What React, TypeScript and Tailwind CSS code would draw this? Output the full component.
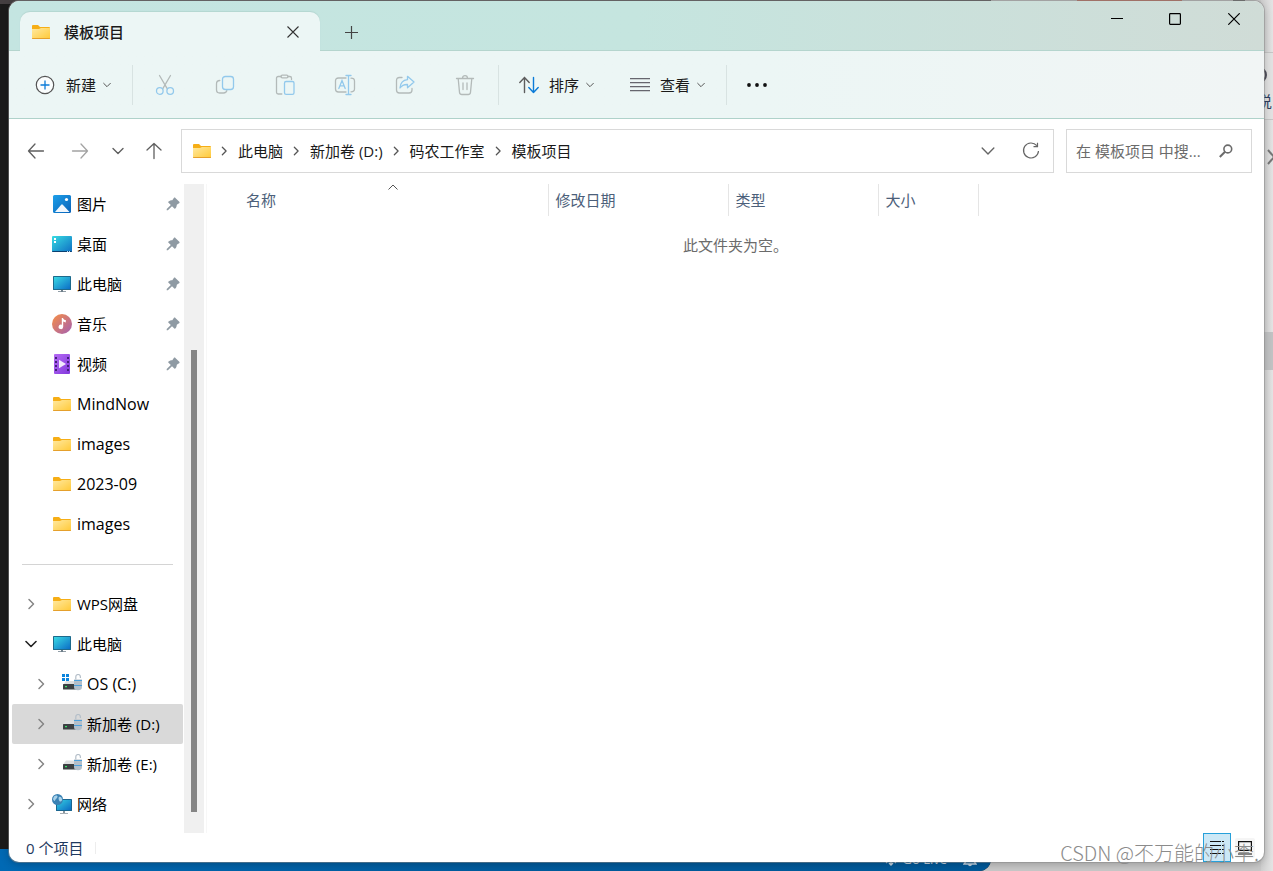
import React, { useState } from 'react';

type IconProps = { className?: string };

type NavItem = {
  label: string;
  icon: React.FC<IconProps>;
  pinned?: boolean;
  latin?: boolean;
};

type TreeItem = {
  id: string;
  label: string;
  icon: React.FC<IconProps>;
  child?: boolean;
  open?: boolean;
  latin?: boolean;
};

/* ---------- colour icons ---------- */

const FolderIcon: React.FC<IconProps> = ({ className }) => (
  <svg viewBox="0 0 20 20" className={className} aria-hidden="true">
    <defs>
      <linearGradient id="folderFront" x1="0" y1="0" x2="1" y2="1">
        <stop offset="0" stopColor="#ffe9a0" />
        <stop offset="1" stopColor="#ffc937" />
      </linearGradient>
    </defs>
    <path d="M1 4a1 1 0 0 1 1-1h5l2 2h9a1 1 0 0 1 1 1v3H1z" fill="#f6ae16" />
    <path d="M1 7h7l2-1h9v10.200a.8.8 0 0 1-.8.8H1.800a.8.800 0 0 1-.8-.8z" fill="url(#folderFront)" />
    <path d="M1 16h18v.3a.7.7 0 0 1-.7.700H1.700a.7.7 0 0 1-.7-.7z" fill="#e5a02c" />
  </svg>
);

const PicturesIcon: React.FC<IconProps> = ({ className }) => (
  <svg viewBox="0 0 20 20" className={className} aria-hidden="true">
    <defs>
      <linearGradient id="picBg" x1="0" y1="0" x2="1" y2="1">
        <stop offset="0" stopColor="#1da0ea" />
        <stop offset="1" stopColor="#0a62b8" />
      </linearGradient>
    </defs>
    <rect x="1" y="1" width="18" height="18" rx="1.500" fill="url(#picBg)" />
    <path d="M3 18l6.200-7.200a1 1 0 0 1 1.600 0L17.500 18z" fill="#f1f7fd" />
    <circle cx="14.500" cy="5.500" r="1.600" fill="#fff" />
  </svg>
);

const DesktopIcon: React.FC<IconProps> = ({ className }) => (
  <svg viewBox="0 0 20 20" className={className} aria-hidden="true">
    <defs>
      <linearGradient id="deskBg" x1="0" y1="0" x2="1" y2="1">
        <stop offset="0" stopColor="#38dce2" />
        <stop offset="1" stopColor="#0f6fc4" />
      </linearGradient>
    </defs>
    <rect x="0" y="2" width="20" height="16" rx="1" fill="url(#deskBg)" />
    <path d="M0 17h20a1 1 0 0 1-1 1H1a1 1 0 0 1-1-1z" fill="#0b3f70" />
    <path d="M2 4h2v2H2zM2 7h2v2H2z" fill="#fff" />
    <path d="M15 17h1v1h-1zM17 17h1v1h-1z" fill="#b9dcf5" />
  </svg>
);

const MonitorIcon: React.FC<IconProps> = ({ className }) => (
  <svg viewBox="0 0 20 20" className={className} aria-hidden="true">
    <defs>
      <linearGradient id="monBg" x1="0" y1="0" x2="1" y2="1">
        <stop offset="0" stopColor="#39d9e4" />
        <stop offset="1" stopColor="#0c6ec6" />
      </linearGradient>
    </defs>
    <rect x="1" y="2" width="18" height="14" rx=".6" fill="#1d6a8c" />
    <rect x="2" y="3" width="16" height="12" fill="url(#monBg)" />
    <path d="M9 16h2v1.200h3V18H6v-.8h3z" fill="#6f7f8a" />
  </svg>
);

const MusicIcon: React.FC<IconProps> = ({ className }) => (
  <svg viewBox="0 0 20 20" className={className} aria-hidden="true">
    <defs>
      <linearGradient id="musicBg" x1="0" y1="0" x2="1" y2="1">
        <stop offset=".1" stopColor="#f08a4e" />
        <stop offset="1" stopColor="#a35fb4" />
      </linearGradient>
    </defs>
    <circle cx="10" cy="10" r="10" fill="url(#musicBg)" />
    <path d="M9.800 4h1.200c.4 1.500 1.500 2 2.800 2.100v2.300c-1 0-2-.3-2.600-.8v5.200a2.300 2.300 0 1 1-1.400-2.100z" fill="#fff" />
  </svg>
);

const VideoIcon: React.FC<IconProps> = ({ className }) => (
  <svg viewBox="0 0 20 20" className={className} aria-hidden="true">
    <defs>
      <linearGradient id="videoBg" x1="0" y1="0" x2="1" y2="1">
        <stop offset="0" stopColor="#b56bf4" />
        <stop offset="1" stopColor="#8238dc" />
      </linearGradient>
    </defs>
    <rect x="2" y="0" width="16" height="20" rx="1" fill="url(#videoBg)" />
    <path
      d="M3 3h2v2H3zM3 7h2v2H3zM3 11h2v2H3zM3 15h2v2H3zM15 3h2v2h-2zM15 7h2v2h-2zM15 11h2v2h-2zM15 15h2v2h-2z"
      fill="#43207a"
    />
    <path d="M7 5.800v8.400l7-4.200z" fill="#f2eafc" />
  </svg>
);

const DriveIcon: React.FC<IconProps> = ({ className }) => (
  <svg viewBox="0 0 20 20" className={className} aria-hidden="true">
    <path d="M1 10.500l3-4h13v4z" fill="#dedfe0" />
    <rect x="1" y="10" width="14" height="5.500" rx=".6" fill="#3c4043" />
    <rect x="3" y="12" width="2" height="1.200" fill="#3be36b" />
    <path d="M13.800 5.500V2.800a2.300 2.300 0 0 1 4.600 0V4" fill="none" stroke="#b4bfc9" strokeWidth="1.200" />
    <path d="M12 5.500h8v7.500a4 3.200 0 0 1-8 0z" fill="#b3bfca" />
    <path d="M12 6h8v1h-8zM12 11h8v1h-8z" fill="#4aa0dc" />
  </svg>
);

const SystemDriveIcon: React.FC<IconProps> = ({ className }) => (
  <svg viewBox="0 0 20 20" className={className} aria-hidden="true">
    <path d="M1 11l3-4h13v4z" fill="#dedfe0" />
    <path d="M0 0h3v3H0zM4 0h3v3H4zM0 4h3v3H0zM4 4h3v3H4z" fill="#0a84dd" />
    <rect x="1" y="10" width="14" height="5.500" rx=".6" fill="#3c4043" />
    <rect x="3" y="12" width="2" height="1.200" fill="#3be36b" />
    <path d="M13.800 5.500V2.800a2.300 2.300 0 0 1 4.600 0V4" fill="none" stroke="#b4bfc9" strokeWidth="1.200" />
    <path d="M12 5.500h8v7.500a4 3.200 0 0 1-8 0z" fill="#b3bfca" />
    <path d="M12 6h8v1h-8zM12 11h8v1h-8z" fill="#4aa0dc" />
  </svg>
);

const NetworkIcon: React.FC<IconProps> = ({ className }) => (
  <svg viewBox="0 0 20 20" className={className} aria-hidden="true">
    <defs>
      <linearGradient id="netBg" x1="0" y1="0" x2="1" y2="1">
        <stop offset="0" stopColor="#35cfe0" />
        <stop offset="1" stopColor="#0b6cc4" />
      </linearGradient>
    </defs>
    <rect x="4" y="5" width="16" height="12" rx=".6" fill="#1a6690" />
    <rect x="5" y="6" width="14" height="10" fill="url(#netBg)" />
    <path d="M11 17h2v2h3v.8H8V19h3z" fill="#8c979f" />
    <circle cx="5.500" cy="5.500" r="5.500" fill="#3b82b4" />
    <path d="M2 2.500C4 .8 6 1.500 5.500 3S3.500 5 3 6.500 1.500 6 1 5zM7 3c1.500-.5 2.500.5 3 2S9 8 8 7.500 6 4 7 3z" fill="#a9d2ea" />
  </svg>
);

const PinIcon: React.FC<IconProps> = ({ className }) => (
  <svg viewBox="0 0 14 14" className={className} aria-hidden="true">
    <path
      d="M7.800 1c.4-.6 1.100-.6 1.600-.1l3.900 3.900c.5.500.4 1.200-.2 1.500L10.800 7.700c-.1 1.600-.4 2.600-1.200 3.600-.4.500-.9.500-1.300.1L6 9.200 1.900 13.200H.7V12L4.800 8 2.500 5.800c-.4-.4-.4-1 .1-1.300 1.100-.8 2.200-1.100 3.700-1.200z"
      fill="#8f9aa3"
    />
  </svg>
);

/* ---------- line icons ---------- */

const ChevronDown: React.FC<IconProps> = ({ className }) => (
  <svg viewBox="0 0 12 12" className={className} fill="none" stroke="currentColor" strokeLinecap="round" strokeLinejoin="round" aria-hidden="true">
    <path d="M1 3.500l5 5 5-5" />
  </svg>
);

const ChevronRight: React.FC<IconProps> = ({ className }) => (
  <svg viewBox="0 0 12 12" className={className} fill="none" stroke="currentColor" strokeLinecap="round" strokeLinejoin="round" aria-hidden="true">
    <path d="M4 1.500L8.500 6 4 10.500" />
  </svg>
);

const ArrowIcon: React.FC<IconProps> = ({ className }) => (
  <svg viewBox="0 0 18 18" className={className} fill="none" stroke="currentColor" strokeWidth="1.300" strokeLinecap="round" strokeLinejoin="round" aria-hidden="true">
    <path d="M16.500 9H1.500M8 2L1.500 9 8 16" />
  </svg>
);

const CutIcon = () => (
  <svg viewBox="0 0 20 22" className="h-[22px] w-5" fill="none" strokeWidth="1.300" strokeLinecap="round" aria-hidden="true">
    <path d="M4.500 1.500l7.700 13.200M15.500 1.500L7.800 14.700" stroke="#b3bab9" />
    <circle cx="4.800" cy="17" r="3.300" stroke="#93c9ec" />
    <circle cx="15.200" cy="17" r="3.300" stroke="#93c9ec" />
  </svg>
);

const CopyIcon = () => (
  <svg viewBox="0 0 20 20" className="h-5 w-5" fill="none" strokeWidth="1.300" strokeLinecap="round" aria-hidden="true">
    <path d="M4.800 5.500c-2 0-3.300 1.200-3.300 3.200v6.100c0 2 1.200 3.200 3.200 3.200h3.800c1.900 0 3-.7 3.300-2.300" stroke="#b3bab9" />
    <rect x="7.500" y="1.500" width="11" height="13" rx="2.800" stroke="#93c9ec" />
  </svg>
);

const PasteIcon = () => (
  <svg viewBox="0 0 20 22" className="h-[22px] w-5" fill="none" strokeWidth="1.300" strokeLinecap="round" aria-hidden="true">
    <path d="M6 2.500H3.200c-1 0-1.700.7-1.700 1.700v14.100c0 1 .7 1.700 1.700 1.700h3.600M13 2.500h1.800c1 0 1.700.7 1.700 1.700v1.300" stroke="#b3bab9" />
    <rect x="6" y="1.200" width="7" height="2.600" rx="1.300" stroke="#b3bab9" />
    <rect x="9.500" y="7.500" width="9.500" height="12.800" rx="1.600" stroke="#93c9ec" />
  </svg>
);

const RenameIcon = () => (
  <svg viewBox="0 0 22 22" className="h-[22px] w-[22px]" fill="none" strokeWidth="1.300" strokeLinecap="round" aria-hidden="true">
    <path d="M12 4H4.500C2.500 4 1.500 5 1.500 7v8c0 2 1 3 3 3H12M17 4.200c2.200 0 3.500.9 3.500 2.800v8c0 1.900-1.300 2.800-3.500 2.800" stroke="#b3bab9" />
    <path d="M4.800 14.500L8 6.500l3.200 8M5.900 11.800h4.200M14.500 1.500v19M12 1.500h5M12 20.500h5" stroke="#93c9ec" />
  </svg>
);

const ShareIcon = () => (
  <svg viewBox="0 0 20 20" className="h-5 w-5" fill="none" strokeWidth="1.300" strokeLinecap="round" strokeLinejoin="round" aria-hidden="true">
    <path d="M7 2.500H4.500c-2 0-3 1-3 3V15c0 2 1 3 3 3H14c2 0 3-1 3-3v-1.500" stroke="#b3bab9" />
    <path d="M12.500 1.300L19 7l-6.500 5.700V9.500c-3.500-.2-5.600.8-7.500 3.500.3-4.700 2.800-7.800 7.500-8.300z" stroke="#93c9ec" />
  </svg>
);

const TrashIcon = () => (
  <svg viewBox="0 0 20 22" className="h-[22px] w-5" fill="none" stroke="#b3bab9" strokeWidth="1.300" strokeLinecap="round" aria-hidden="true">
    <path d="M1.500 4.500h17M3.200 4.500l1.300 13.800c.2 1.300 1 2.200 2.300 2.200h6.400c1.300 0 2.100-.9 2.300-2.200l1.300-13.800M7.500 4.300c0-3.700 5-3.700 5 0M8 9v6.500M12 9v6.500" />
  </svg>
);

const SortIcon = () => (
  <svg viewBox="0 0 20 18" className="h-[18px] w-5" fill="none" strokeWidth="1.400" strokeLinecap="round" strokeLinejoin="round" aria-hidden="true">
    <path d="M5.500 16.500v-15M.8 6.500l4.700-5 4.700 5" stroke="#5d5d5d" />
    <path d="M14.500 1.500v15M9.800 11.500l4.700 5 4.700-5" stroke="#0a7bd8" />
  </svg>
);

const quickItems: NavItem[] = [
  { label: '图片', icon: PicturesIcon, pinned: true },
  { label: '桌面', icon: DesktopIcon, pinned: true },
  { label: '此电脑', icon: MonitorIcon, pinned: true },
  { label: '音乐', icon: MusicIcon, pinned: true },
  { label: '视频', icon: VideoIcon, pinned: true },
  { label: 'MindNow', icon: FolderIcon, latin: true },
  { label: 'images', icon: FolderIcon, latin: true },
  { label: '2023-09', icon: FolderIcon, latin: true },
  { label: 'images', icon: FolderIcon, latin: true },
];

const treeItems: TreeItem[] = [
  { id: 'wps', label: 'WPS网盘', icon: FolderIcon },
  { id: 'pc', label: '此电脑', icon: MonitorIcon, open: true },
  { id: 'c', label: 'OS (C:)', icon: SystemDriveIcon, child: true, latin: true },
  { id: 'd', label: '新加卷 (D:)', icon: DriveIcon, child: true },
  { id: 'e', label: '新加卷 (E:)', icon: DriveIcon, child: true },
  { id: 'net', label: '网络', icon: NetworkIcon },
];

const crumbs = ['此电脑', '新加卷 (D:)', '码农工作室', '模板项目'];

const editActions = [
  { label: '剪切', icon: CutIcon },
  { label: '复制', icon: CopyIcon },
  { label: '粘贴', icon: PasteIcon },
  { label: '重命名', icon: RenameIcon },
  { label: '共享', icon: ShareIcon },
  { label: '删除', icon: TrashIcon },
];

// Whatever peeks out from behind the explorer window
const Backdrop = () => (
  <div className="absolute inset-0 overflow-hidden bg-[#c9c9c9]">
    <div className="absolute inset-y-0 left-0 right-[282px] overflow-hidden rounded-br-xl bg-[#1b1b1b]">
      <div className="absolute inset-x-0 top-0 h-1 bg-[#443f41]" />
      <div className="absolute inset-x-0 bottom-0 flex h-[22px] items-center justify-end gap-4 bg-linear-to-r from-[#0069b4] via-[#005c9e] to-[#005a9a] pr-[14px] text-[13px] text-[#c5d5e2]">
        <span className="flex items-center gap-1">
          <svg viewBox="0 0 14 14" className="h-[14px] w-[14px]" fill="none" stroke="currentColor" strokeWidth="1.300" aria-hidden="true">
            <path d="M3 10a5 5 0 1 1 8 0M7 6v7M5 10l2 2 2-2" />
          </svg>
          Go Live
        </span>
        <svg viewBox="0 0 14 14" className="h-[14px] w-[14px]" fill="none" stroke="currentColor" strokeWidth="1.300" aria-hidden="true">
          <path d="M1 11h12l-1.500-2V5.500a4.500 4.500 0 0 0-9 0V9zM5.500 11a1.500 1.500 0 0 0 3 0" />
        </svg>
      </div>
    </div>
    <div className="absolute right-[91px] top-0 h-1 w-[105px] bg-[#c5604b]" />
    <div className="absolute right-[28px] top-0 h-1 w-3 bg-[#555]" />
    <div className="absolute inset-y-0 right-0 w-3 bg-linear-to-r from-[#cfcfcf] to-[#e4e4e4]">
      <div className="absolute inset-x-0 top-[52px] h-[68px] border-y border-[#c6c6c6] bg-[#e2e2e2]" />
      <div className="absolute right-[6px] top-[67px] h-4 w-4 rounded-full border-2 border-[#50505c]" />
      <span className="absolute right-px top-[91px] text-[15px] leading-5 text-[#2f3f5f]">说</span>
      <svg viewBox="0 0 12 16" className="absolute -right-1 top-[149px] h-4 w-3" fill="none" stroke="#777" strokeWidth="2" aria-hidden="true">
        <path d="M3 1l6 7-6 7" />
      </svg>
      <div className="absolute inset-x-0 top-[332px] h-[38px] bg-[#c2c3c4]" />
    </div>
  </div>
);

const TitleBar = () => (
  <header className="flex h-[50px] shrink-0 border-b border-[#b5d5ce] bg-linear-to-r from-[#c4e5e1] via-[#c5e5df] via-50% to-[#d0dcd7]">
    <div className="relative z-10 ml-[11px] mt-[11px] flex h-[39px] w-[300px] items-center rounded-t-[10px] bg-[#ecf6f5] pl-[11px] pr-[15px] shadow-[0_-1px_1px_#b4d6d1]">
      <FolderIcon className="h-5 w-5 shrink-0" />
      <span className="ml-[13px] flex-1 text-[15px] font-medium leading-5 text-[#1a1a1a]">模板项目</span>
      <button type="button" aria-label="关闭标签页" className="flex h-6 w-6 items-center justify-center text-[#333]">
        <svg viewBox="0 0 12 12" className="h-3 w-3" stroke="currentColor" strokeWidth="1.100" aria-hidden="true">
          <path d="M.5.500l11 11M11.500.500l-11 11" />
        </svg>
      </button>
    </div>
    <button type="button" aria-label="新建标签页" className="ml-4 mt-[19px] flex h-6 w-[30px] items-center justify-center text-[#444]">
      <svg viewBox="0 0 13 13" className="h-[13px] w-[13px]" stroke="currentColor" strokeWidth="1.200" aria-hidden="true">
        <path d="M6.500 0v13M0 6.500h13" />
      </svg>
    </button>
    <div className="ml-auto flex h-9 text-black">
      <button type="button" aria-label="最小化" className="flex w-[58px] items-center justify-center">
        <svg viewBox="0 0 12 12" className="h-3 w-3" stroke="currentColor" aria-hidden="true">
          <path d="M0 5.500h12" />
        </svg>
      </button>
      <button type="button" aria-label="最大化" className="flex w-[58px] items-center justify-center">
        <svg viewBox="0 0 12 12" className="h-3 w-3" fill="none" stroke="currentColor" strokeWidth="1.200" aria-hidden="true">
          <rect x=".6" y=".6" width="10.800" height="10.800" rx=".8" />
        </svg>
      </button>
      <button type="button" aria-label="关闭" className="flex w-[60px] items-center justify-center">
        <svg viewBox="0 0 12 12" className="h-3 w-3" stroke="currentColor" strokeWidth="1.200" aria-hidden="true">
          <path d="M.3.300l11.400 11.400M11.700.300L.3 11.700" />
        </svg>
      </button>
    </div>
  </header>
);

const Divider = () => <span className="h-10 w-px shrink-0 bg-[#d8e3e2]" />;

const Toolbar = () => (
  <div className="flex h-[68px] shrink-0 items-center border-b border-[#afd2ca] bg-linear-to-r from-[#ecf6f5] via-[#ecf6f5] via-60% to-[#f1f5f5] text-[15px] leading-5 text-[#1a1a1a]">
    <button type="button" className="flex h-10 items-center pl-[26px] pr-[21px]">
      <svg viewBox="0 0 20 20" className="h-5 w-5" fill="none" aria-hidden="true">
        <circle cx="10" cy="10" r="8.700" fill="#fafdfd" stroke="#555" strokeWidth="1.200" />
        <path d="M10 5.500v9M5.500 10h9" stroke="#0a7bd8" strokeWidth="1.300" />
      </svg>
      <span className="ml-[11px]">新建</span>
      <ChevronDown className="ml-[7px] h-2 w-2 stroke-[1.500] text-[#555]" />
    </button>
    <Divider />
    <div className="flex pl-[2px] pr-[3px]">
      {editActions.map(({ label, icon: Icon }) => (
        <button key={label} type="button" aria-label={label} disabled className="flex h-10 w-[60px] items-center justify-center">
          <Icon />
        </button>
      ))}
    </div>
    <Divider />
    <button type="button" className="flex h-10 items-center pl-5 pr-[18px]">
      <SortIcon />
      <span className="ml-[10px]">排序</span>
      <ChevronDown className="ml-[7px] h-2 w-2 stroke-[1.500] text-[#555]" />
    </button>
    <button type="button" className="flex h-10 items-center pl-[18px] pr-[21px]">
      <svg viewBox="0 0 20 14" className="h-[14px] w-5" stroke="#66666e" strokeWidth="1.200" aria-hidden="true">
        <path d="M0 .6h20M0 4.600h20M0 8.600h20M0 12.600h20" />
      </svg>
      <span className="ml-[10px]">查看</span>
      <ChevronDown className="ml-[7px] h-2 w-2 stroke-[1.500] text-[#555]" />
    </button>
    <Divider />
    <button type="button" aria-label="查看更多" className="flex h-10 w-[60px] items-center justify-center">
      <svg viewBox="0 0 20 4" className="h-1 w-5" fill="#111" aria-hidden="true">
        <circle cx="2" cy="2" r="1.900" />
        <circle cx="10" cy="2" r="1.900" />
        <circle cx="18" cy="2" r="1.900" />
      </svg>
    </button>
  </div>
);

const AddressRow = () => {
  const [query, setQuery] = useState('');

  return (
    <div className="flex shrink-0 items-center pb-[11px] pl-[5px] pr-3 pt-[10px]">
      <nav className="mr-[7px] flex h-11 text-[#5f5f5f]" aria-label="导航">
        <button type="button" aria-label="后退" className="flex w-11 items-center justify-center">
          <ArrowIcon className="h-[18px] w-[18px]" />
        </button>
        <button type="button" aria-label="前进" className="flex w-11 items-center justify-center text-[#a3a3a3]">
          <ArrowIcon className="h-[18px] w-[18px] rotate-180" />
        </button>
        <button type="button" aria-label="最近浏览的位置" className="flex w-8 items-center justify-center">
          <ChevronDown className="h-3 w-3 stroke-[1.400]" />
        </button>
        <button type="button" aria-label="上移" className="flex w-10 items-center justify-center">
          <ArrowIcon className="h-[18px] w-[18px] rotate-90" />
        </button>
      </nav>
      <div className="flex h-11 min-w-0 flex-1 items-center border border-[#d9d9d9] pl-[10px] text-[15px] leading-5 text-[#1a1a1a]">
        <FolderIcon className="h-5 w-5 shrink-0" />
        {crumbs.map((crumb) => (
          <React.Fragment key={crumb}>
            <ChevronRight className="ml-[7px] mr-[9px] h-[10px] w-[10px] shrink-0 stroke-[1.500] text-[#555]" />
            <a href="#" className="whitespace-nowrap pr-px">
              {crumb}
            </a>
          </React.Fragment>
        ))}
        <div className="ml-auto flex h-full text-[#666]">
          <button type="button" aria-label="以前的位置" className="flex w-[43px] items-center justify-center">
            <ChevronDown className="h-[14px] w-[14px] stroke-[1.200]" />
          </button>
          <button type="button" aria-label="刷新" className="flex w-11 items-center justify-center">
            <svg viewBox="0 0 18 18" className="h-[18px] w-[18px]" fill="none" stroke="currentColor" strokeWidth="1.200" aria-hidden="true">
              <path d="M14.800 3.700A7.500 7.500 0 1 0 16.500 9M15.500.8v3.900h-4" />
            </svg>
          </button>
        </div>
      </div>
      <label className="ml-3 flex h-11 w-[186px] items-center border border-[#d9d9d9] pl-[9px] pr-[18px]">
        <input
          type="text"
          aria-label="搜索"
          value={query}
          onChange={(e) => setQuery(e.target.value)}
          placeholder="在 模板项目 中搜..."
          className="min-w-0 flex-1 bg-transparent text-[15px] leading-5 outline-none placeholder:text-[#6b6b6b]"
        />
        <svg viewBox="0 0 14 14" className="ml-2 h-[14px] w-[14px] shrink-0" fill="none" stroke="#6b6b6b" aria-hidden="true">
          <circle cx="8.800" cy="5" r="3.900" strokeWidth="1.600" />
          <path d="M6 7.800L.8 13" strokeWidth="2" />
        </svg>
      </label>
    </div>
  );
};

const Sidebar = () => {
  const [selected, setSelected] = useState('d');

  return (
    <aside className="flex w-[195px] shrink-0">
      <div className="w-[175px] overflow-hidden pl-[3px] pr-px text-[15px] leading-5 text-black">
        <ul>
          {quickItems.map(({ label, icon: Icon, pinned, latin }, index) => (
            <li key={index}>
              <button type="button" className="flex h-10 w-full items-center pl-10 pr-[3px] text-left">
                <Icon className="h-5 w-5 shrink-0" />
                <span className={latin ? 'ml-[5px] flex-1 text-base' : 'ml-[5px] flex-1'}>{label}</span>
                {pinned && <PinIcon className="h-[14px] w-[14px]" />}
              </button>
            </li>
          ))}
        </ul>
        <div className="flex h-10 items-center px-[10px]">
          <hr className="w-full border-[#d4d4d4]" />
        </div>
        <ul>
          {treeItems.map(({ id, label, icon: Icon, child, open, latin }) => (
            <li key={id}>
              <button
                type="button"
                onClick={() => setSelected(id)}
                className={`flex h-10 w-full items-center rounded-xs text-left ${child ? 'pl-[23px]' : 'pl-[13px]'} ${selected === id ? 'bg-[#d9d9d9]' : ''}`}
              >
                {open ? (
                  <ChevronDown className="h-3 w-3 shrink-0 stroke-[1.600] text-[#222]" />
                ) : (
                  <ChevronRight className="h-3 w-3 shrink-0 stroke-[1.500] text-[#858585]" />
                )}
                <Icon className="ml-[15px] h-5 w-5 shrink-0" />
                <span className={latin ? 'ml-[5px] whitespace-nowrap text-base' : 'ml-[5px] whitespace-nowrap'}>{label}</span>
              </button>
            </li>
          ))}
        </ul>
      </div>
      {/* scroll track */}
      <div className="flex w-5 flex-col bg-[#f0f0f0] pb-[21px] pl-[7px] pt-[166px]">
        <div className="w-[6px] flex-1 bg-[#858585]" />
      </div>
    </aside>
  );
};

const FileList = () => (
  <main className="ml-[2px] min-w-0 flex-1 border-l border-[#f7f7f7]">
    <table className="ml-[31px] table-fixed border-collapse text-left text-[15px] leading-5 text-[#4c607a]">
      <thead>
        <tr className="h-8">
          <th className="relative w-[310px] border-r border-[#e5e5e5] p-0 pl-2 font-normal">
            名称
            <svg viewBox="0 0 10 6" className="absolute left-[150px] top-0 h-[6px] w-[10px]" fill="none" stroke="#555" aria-hidden="true">
              <path d="M.5 5.500L5 1l4.500 4.500" />
            </svg>
          </th>
          <th className="w-[180px] border-r border-[#e5e5e5] p-0 pl-[7px] font-normal">修改日期</th>
          <th className="w-[150px] border-r border-[#e5e5e5] p-0 pl-[7px] font-normal">类型</th>
          <th className="w-[100px] border-r border-[#e5e5e5] p-0 pl-[7px] font-normal">大小</th>
        </tr>
      </thead>
    </table>
    <p className="mt-[19px] text-center text-[15px] leading-5 text-[#6b6b6b]">此文件夹为空。</p>
  </main>
);

const StatusBar = () => (
  <footer className="flex h-[29px] shrink-0 items-center pl-[17px] pr-[5px] text-[15px] leading-5 text-[#1f3a5f]">
    <span>0 个项目</span>
    <span className="ml-3 h-3 w-px bg-[#ededed]" />
    <div className="ml-auto flex h-full">
      <button type="button" aria-label="详细信息" className="flex h-full w-7 items-center justify-center border border-[#26a0da] bg-[#cce8f6]">
        <svg viewBox="0 0 14 14" className="h-[14px] w-[14px]" stroke="#111" aria-hidden="true">
          <path d="M0 .5h11M12 .5h2M0 4.500h11M12 4.500h2M0 8.500h11M12 8.500h2M0 12.500h11M12 12.500h2" />
        </svg>
      </button>
      <button type="button" aria-label="大缩略图" className="flex h-full w-7 items-center justify-center">
        <span className="flex h-5 w-5 items-center justify-center rounded-xs bg-[#f5f5f5]">
          <svg viewBox="0 0 14 14" className="h-[14px] w-[14px]" fill="none" stroke="#111" strokeWidth="1.200" aria-hidden="true">
            <path d="M.6.600h12.800v8.800H.6zM0 13h14" />
          </svg>
        </span>
      </button>
    </div>
  </footer>
);

export default function App() {
  return (
    <div className="relative flex h-screen flex-col px-[9px] pb-[9px] pt-px font-['Open_Sans','Noto_Sans_CJK_SC',sans-serif]">
      <Backdrop />
      <div className="relative flex min-h-0 flex-1 flex-col overflow-hidden rounded-[10px] bg-white shadow-[0_0_0_1px_#8a8a8a80,0_2px_8px_#00000040]">
        <TitleBar />
        <Toolbar />
        <AddressRow />
        <div className="flex min-h-0 flex-1">
          <Sidebar />
          <FileList />
        </div>
        <StatusBar />
      </div>
      <span className="pointer-events-none absolute bottom-1 right-[14px] whitespace-nowrap font-['Noto_Sans_CJK_SC',sans-serif] text-[20px] font-light leading-7 text-[#8b8b8b]">
        CSDN @不万能的小李.
      </span>
    </div>
  );
}
